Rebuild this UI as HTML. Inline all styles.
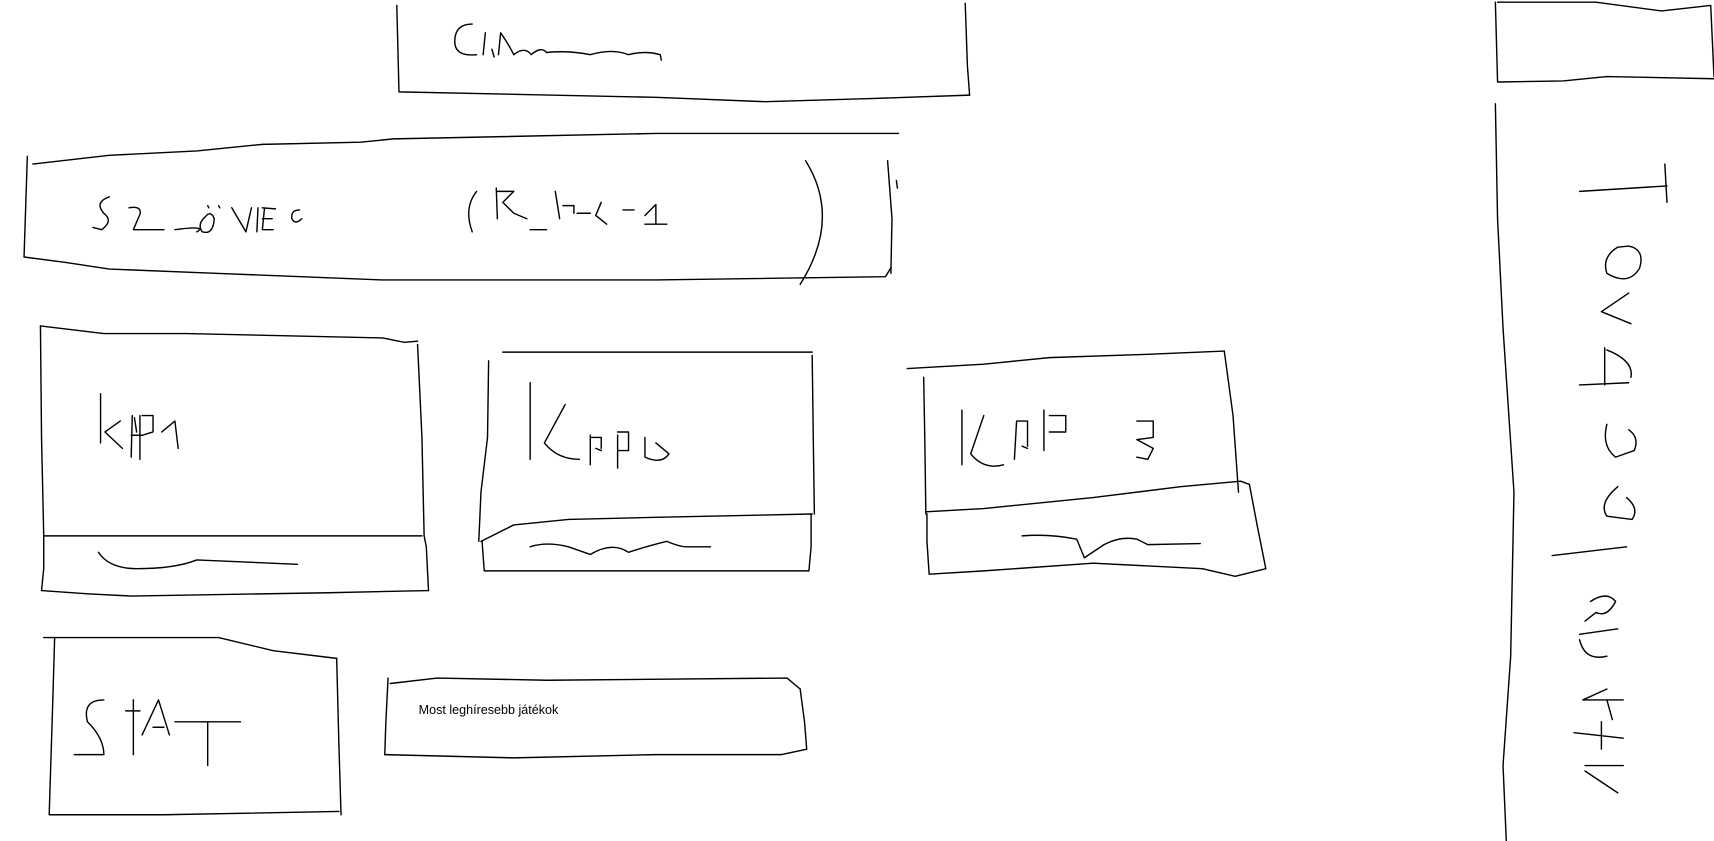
<!DOCTYPE html>
<html><head><meta charset="utf-8"><style>
html,body{margin:0;padding:0;background:#fff;width:1714px;height:841px;overflow:hidden}
svg{display:block}
</style></head><body>
<svg width="1714" height="841" viewBox="0 0 1568 769" preserveAspectRatio="none" xmlns="http://www.w3.org/2000/svg">
<g fill="none" stroke="#000" stroke-width="1.3" stroke-linejoin="round" stroke-linecap="round">
<!-- Cim box -->
<polyline points="363,5 365,84 600,89 700,93 800,90 887,87"/>
<polyline points="883,3 885,60 887,87"/>
<path d="M432,22 Q416,22 416,38 Q416,52 436,50 M442,50 L444,30 M450,45 L452,52 M456,50 L458,30 Q465,40 470,50 Q480,42 486,50 Q495,42 500,48 Q520,46 540,50 Q560,44 575,50 Q590,46 604,50 L605,55"/>
<!-- Szoveg box -->
<polyline points="30,150 100,142 180,138 240,132 330,130 360,127 600,122 822,122"/>
<polyline points="25,143 22,235 60,240 100,246 200,250 350,256 600,256 810,253 815,245"/>
<polyline points="812,147 816,200 815,250"/>
<polyline points="820,165 821,172"/>
<path d="M737,147 Q770,200 732,260"/>
<path d="M100,180 Q86,185 95,195 Q104,202 93,210 L85,208 M118,190 Q130,188 128,196 L122,210 L150,210 M160,210 Q190,206 180,212 M188,198 Q180,205 185,212 Q195,215 196,200 Q193,192 188,198 M190,188 L191,190 M200,188 L201,190 M212,190 L225,212 L230,190 M236,190 L235,212 M242,190 L240,210 L250,210 M240,190 L252,191 M240,200 L249,200 M274,192 Q266,192 267,200 Q270,206 276,200 M436,175 Q424,190 432,212 M454,172 L455,200 M455,175 L470,175 L460,185 L470,195 L482,200 M485,210 L500,210 M508,175 L512,200 M515,188 L525,188 L525,195 M528,195 L540,195 M550,185 L545,197 L555,205 M570,192 L580,192 M590,197 L600,187 L600,205 M590,205 L610,205"/>
<!-- KEP1 -->
<polyline points="37,298 95,305 170,305 350,309 370,313 382,312"/>
<polyline points="382,315 386,400 388,490"/>
<polyline points="37,298 38,400 40,490 386,490"/>
<polyline points="40,490 40,520 38,540 80,543 120,545 300,542 392,540 390,500 388,490"/>
<path d="M90,505 Q100,520 125,520 Q160,520 180,512 L272,516"/>
<path d="M92,360 L92,405 M110,385 L96,395 L112,410 M121,380 L120,418 M123,382 L125,395 M120,398 L130,398 M128,380 L128,420 M130,380 L140,380 L140,395 L130,398 M160,385 L163,410 M148,395 L160,385"/>
<!-- KEP2 -->
<polyline points="460,322 600,322 743,322"/>
<polyline points="743,325 744,400 745,470"/>
<polyline points="447,330 446,400 440,450 438,495"/>
<polyline points="440,495 470,480 520,475 600,473 743,470"/>
<polyline points="742,470 742,500 740,522 600,522 443,522 441,495"/>
<path d="M485,500 Q500,495 520,500 L540,507 Q560,495 575,505 Q590,500 610,495 Q622,500 628,500 L650,500"/>
<path d="M485,350 L485,420 M517,370 L498,405 Q510,420 530,420 M540,398 L540,425 M540,400 L550,400 M550,400 L550,410 M545,410 L550,412 M565,398 L565,428 M565,395 L575,395 L575,412 L566,412 M590,400 L590,418 Q605,425 612,415 M600,405 L612,415"/>
<!-- KEP3 -->
<polyline points="830,337 900,333 960,327 1050,324 1120,321"/>
<polyline points="1120,321 1128,380 1133,450"/>
<polyline points="845,345 846,400 847,470"/>
<polyline points="847,468 900,465 1000,455 1080,445 1135,440 1143,443"/>
<polyline points="1143,443 1150,480 1158,520 1130,527 1100,520 1000,515 900,522 850,525 848,495 848,470"/>
<path d="M935,490 Q960,488 985,493 L992,510 L1010,498 Q1025,490 1040,493 L1050,498 L1098,497"/>
<path d="M880,375 L880,425 M900,380 L888,415 Q900,430 918,425 M930,385 L928,420 M930,385 L940,385 L940,408 M935,408 L940,410 M955,375 L955,412 M960,380 L975,380 L975,395 L960,395 M1040,385 L1055,385 L1055,400 L1040,402 L1055,410 L1050,420 L1040,418"/>
<!-- Stat box -->
<polyline points="40,583 120,583 200,583 250,595 308,602"/>
<polyline points="308,602 310,680 312,745"/>
<polyline points="50,583 48,650 45,745 150,745 310,742"/>
<path d="M95,640 Q75,640 80,660 Q95,675 95,690 L68,690 M115,650 L128,650 M122,640 L122,690 M130,672 L145,640 L155,672 M140,665 L150,665 M160,660 L220,660 M190,660 L190,700"/>
<!-- Most box -->
<polyline points="357,625 400,620 500,622 720,620 732,630"/>
<polyline points="732,630 736,660 738,685 715,690 600,690 470,693 352,690"/>
<polyline points="355,620 353,660 352,690"/>
<!-- Right sidebar -->
<polyline points="1368,2 1370,75 1430,74 1470,70 1568,72"/>
<polyline points="1370,2 1460,2 1520,10 1565,5 1568,70"/>
<polyline points="1368,95 1370,200 1375,300 1385,450 1382,600 1375,700 1378,769"/>
<path d="M1445,175 L1525,170 M1523,150 L1525,185 M1480,226 Q1465,235 1470,250 Q1490,262 1500,245 Q1505,228 1490,225 Z M1490,268 L1465,285 L1492,296 M1468,318 L1468,352 M1470,320 Q1495,330 1492,345 M1445,352 L1490,350 M1470,388 Q1465,408 1478,418 L1495,412 Q1500,400 1490,393 M1480,445 Q1462,460 1470,472 L1493,475 Q1500,465 1488,455 M1420,508 L1488,500 M1455,550 Q1470,540 1478,550 Q1470,565 1460,560 L1450,568 M1445,580 L1480,575 M1445,585 Q1450,605 1470,600 M1470,630 L1448,640 L1485,640 M1470,640 L1475,658 M1440,670 L1485,675 M1465,660 L1465,685 M1450,700 L1485,700 M1450,705 L1480,725"/>
</g>
<text x="383" y="653" font-family="Liberation Sans, sans-serif" font-size="11.5" fill="#000">Most leghíresebb játékok</text>
</svg>
</body></html>
